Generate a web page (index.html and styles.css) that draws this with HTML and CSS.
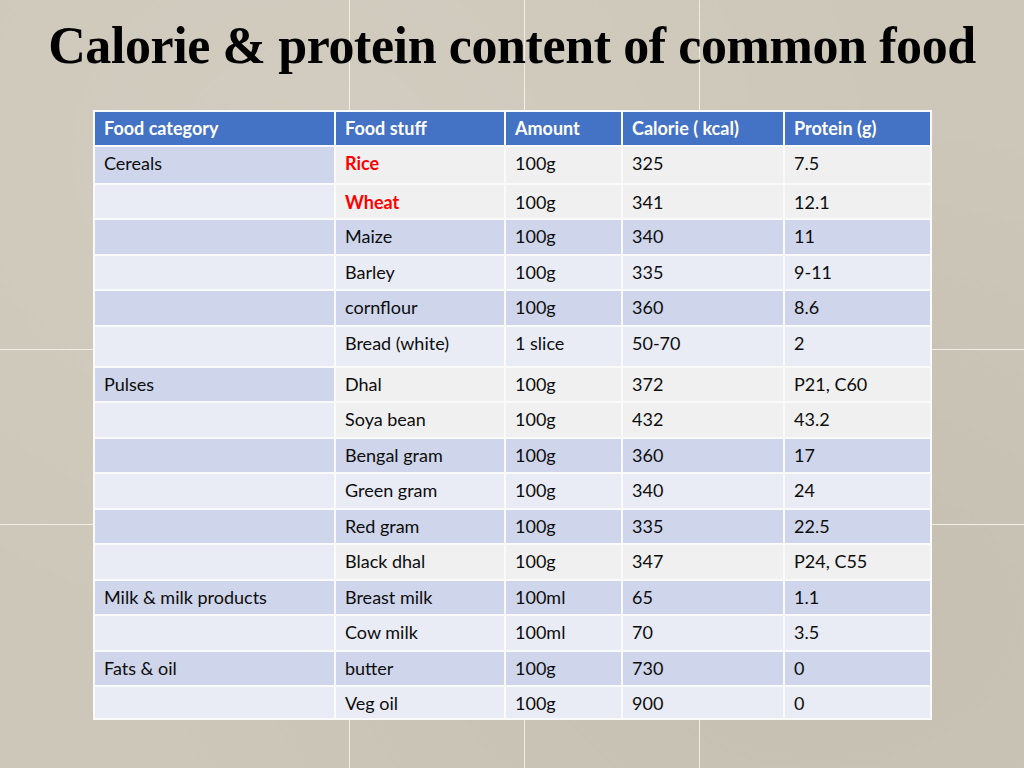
FILE: index.html
```html
<!DOCTYPE html>
<html lang="en">
<head>
<meta charset="utf-8">
<title>Calorie &amp; protein content of common food</title>
<link rel="stylesheet" href="styles.css">
</head>
<body>
<main class="slide">
  <h1 class="title">Calorie &amp; protein content of common food</h1>
  <table class="food">
    <colgroup>
      <col class="c1"><col class="c2"><col class="c3"><col class="c4"><col class="c5">
    </colgroup>
    <thead>
      <tr><th>Food category</th><th>Food stuff</th><th>Amount</th><th>Calorie ( kcal)</th><th>Protein (g)</th></tr>
    </thead>
    <tbody>
      <tr class="odd plain tall1"><td>Cereals</td><td class="red">Rice</td><td>100g</td><td>325</td><td>7.5</td></tr>
      <tr class="even plain short"><td></td><td class="red">Wheat</td><td>100g</td><td>341</td><td>12.1</td></tr>
      <tr class="odd"><td></td><td>Maize</td><td>100g</td><td>340</td><td>11</td></tr>
      <tr class="even"><td></td><td>Barley</td><td>100g</td><td>335</td><td>9-11</td></tr>
      <tr class="odd"><td></td><td>cornflour</td><td>100g</td><td>360</td><td>8.6</td></tr>
      <tr class="even tall2"><td></td><td>Bread (white)</td><td>1 slice</td><td>50-70</td><td>2</td></tr>
      <tr class="odd plain"><td>Pulses</td><td>Dhal</td><td>100g</td><td>372</td><td>P21, C60</td></tr>
      <tr class="even plain"><td></td><td>Soya bean</td><td>100g</td><td>432</td><td>43.2</td></tr>
      <tr class="odd"><td></td><td>Bengal gram</td><td>100g</td><td>360</td><td>17</td></tr>
      <tr class="even"><td></td><td>Green gram</td><td>100g</td><td>340</td><td>24</td></tr>
      <tr class="odd"><td></td><td>Red gram</td><td>100g</td><td>335</td><td>22.5</td></tr>
      <tr class="even plain"><td></td><td>Black dhal</td><td>100g</td><td>347</td><td>P24, C55</td></tr>
      <tr class="odd"><td>Milk &amp; milk products</td><td>Breast milk</td><td>100ml</td><td>65</td><td>1.1</td></tr>
      <tr class="even"><td></td><td>Cow milk</td><td>100ml</td><td>70</td><td>3.5</td></tr>
      <tr class="odd"><td>Fats &amp; oil</td><td>butter</td><td>100g</td><td>730</td><td>0</td></tr>
      <tr class="even last"><td></td><td>Veg oil</td><td>100g</td><td>900</td><td>0</td></tr>
    </tbody>
  </table>
</main>
</body>
</html>
```
FILE: styles.css
```css
html, body {
  margin: 0;
  padding: 0;
}

body {
  width: 1024px;
  height: 768px;
  overflow: hidden;
  background-color: #cdc7b9;
  background-image:
    linear-gradient(#f1eee5, #f1eee5),
    linear-gradient(#f1eee5, #f1eee5),
    linear-gradient(#f1eee5, #f1eee5),
    linear-gradient(#f1eee5, #f1eee5),
    linear-gradient(#f1eee5, #f1eee5),
    radial-gradient(ellipse at 30% 20%, rgba(255,255,255,0.10), rgba(255,255,255,0) 60%),
    radial-gradient(ellipse at 80% 80%, rgba(0,0,0,0.04), rgba(0,0,0,0) 60%);
  background-size: 1px 100%, 1px 100%, 1px 100%, 100% 1px, 100% 1px, 100% 100%, 100% 100%;
  background-position: 349px 0, 524px 0, 699px 0, 0 349px, 0 524px, 0 0, 0 0;
  background-repeat: no-repeat;
}

.slide {
  display: flex;
  flex-direction: column;
  align-items: flex-start;
  padding: 0 0 0 93px;
}

.title {
  align-self: stretch;
  margin: 13px 0 0 -93px;
  font-family: "Liberation Serif", "Times New Roman", serif;
  font-weight: bold;
  font-size: 52px;
  line-height: 66px;
  text-align: center;
  color: #000;
  letter-spacing: -0.4px;
}

.food {
  margin-top: 31px;
  border-collapse: collapse;
  table-layout: fixed;
  width: 837px;
  font-family: "Lato", "Open Sans", sans-serif;
  font-size: 18px;
  color: #0d0d0d;
}

.c1 { width: 241px; }
.c2 { width: 170px; }
.c3 { width: 117px; }
.c4 { width: 162px; }
.c5 { width: 147px; }

.food th,
.food td {
  border: 2px solid #fafafa;
  padding: 5px 9px 0 9px;
  text-align: left;
  vertical-align: top;
  line-height: 22px;
  white-space: nowrap;
}

.food th {
  height: 28px;
  background: #4472c4;
  color: #fff;
  font-weight: bold;
}

.food td {
  height: 28.5px;
}

.food .odd td { background: #cfd5ea; }
.food .even td { background: #e9ebf5; }
.food .plain td { background: #f0f0f0; }
.food .plain.odd td:first-child { background: #cfd5ea; }
.food .plain.even td:first-child { background: #e9ebf5; }

.food .tall1 td { height: 31px; padding-top: 5px; }
.food .short td { height: 27px; padding-top: 6px; }
.food .tall2 td { height: 34px; }
.food .last td { height: 26px; }

.food .red {
  color: #ff0000;
  font-weight: bold;
}
```
